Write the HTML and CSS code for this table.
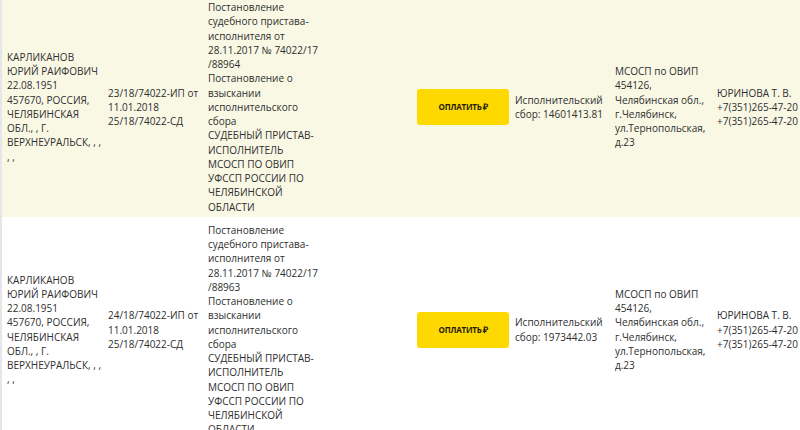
FILE: index.html
```html
<!DOCTYPE html>
<html lang="ru">
<head>
<meta charset="utf-8">
<title>Задолженности</title>
<link rel="stylesheet" href="styles.css">
</head>
<body>
<div class="page">
  <div class="table">
    <div class="row row-alt">
      <div class="cell">КАРЛИКАНОВ<br>ЮРИЙ РАИФОВИЧ<br>22.08.1951<br>457670, РОССИЯ,<br>ЧЕЛЯБИНСКАЯ<br>ОБЛ., , Г.<br>ВЕРХНЕУРАЛЬСК, , ,<br>, ,</div>
      <div class="cell">23/18/74022-ИП от<br>11.01.2018<br>25/18/74022-СД</div>
      <div class="cell"><div class="doc">Постановление<br>судебного пристава-<br>исполнителя от<br>28.11.2017 № 74022/17<br>/88964<br>Постановление о<br>взыскании<br>исполнительского<br>сбора<br>СУДЕБНЫЙ ПРИСТАВ-<br>ИСПОЛНИТЕЛЬ<br>МСОСП ПО ОВИП<br>УФССП РОССИИ ПО<br>ЧЕЛЯБИНСКОЙ<br>ОБЛАСТИ</div></div>
      <div class="cell cell-btn"><button class="pay">ОПЛАТИТЬ<span class="rub">₽</span></button></div>
      <div class="cell">Исполнительский<br>сбор: 14601413.81</div>
      <div class="cell">МСОСП по ОВИП<br>454126,<br>Челябинская обл.,<br>г.Челябинск,<br>ул.Тернопольская,<br>д.23</div>
      <div class="cell cell-last">ЮРИНОВА Т. В.<br>+7(351)265-47-20<br>+7(351)265-47-20</div>
    </div>
    <div class="row">
      <div class="cell">КАРЛИКАНОВ<br>ЮРИЙ РАИФОВИЧ<br>22.08.1951<br>457670, РОССИЯ,<br>ЧЕЛЯБИНСКАЯ<br>ОБЛ., , Г.<br>ВЕРХНЕУРАЛЬСК, , ,<br>, ,</div>
      <div class="cell">24/18/74022-ИП от<br>11.01.2018<br>25/18/74022-СД</div>
      <div class="cell"><div class="doc">Постановление<br>судебного пристава-<br>исполнителя от<br>28.11.2017 № 74022/17<br>/88963<br>Постановление о<br>взыскании<br>исполнительского<br>сбора<br>СУДЕБНЫЙ ПРИСТАВ-<br>ИСПОЛНИТЕЛЬ<br>МСОСП ПО ОВИП<br>УФССП РОССИИ ПО<br>ЧЕЛЯБИНСКОЙ<br>ОБЛАСТИ</div></div>
      <div class="cell cell-btn"><button class="pay">ОПЛАТИТЬ<span class="rub">₽</span></button></div>
      <div class="cell">Исполнительский<br>сбор: 1973442.03</div>
      <div class="cell">МСОСП по ОВИП<br>454126,<br>Челябинская обл.,<br>г.Челябинск,<br>ул.Тернопольская,<br>д.23</div>
      <div class="cell cell-last">ЮРИНОВА Т. В.<br>+7(351)265-47-20<br>+7(351)265-47-20</div>
    </div>
  </div>
</div>
</body>
</html>
```

FILE: styles.css
```css
html, body {
  margin: 0;
  padding: 0;
  background: #ffffff;
  overflow: hidden;
}
body {
  width: 800px;
  height: 430px;
  font-family: "Open Sans", "Liberation Sans", sans-serif;
  font-size: 10px;
  line-height: 14.25px;
  color: #2e2e2e;
}
.page {
  border-left: 2px solid #e4e6e9;
  height: 430px;
  overflow: hidden;
}
.table {
  margin-top: -6px;
  width: 798px;
}
.row {
  display: grid;
  grid-template-columns: 101px 100px 207px 100px 100px 102px 88px;
  align-items: center;
  background: #ffffff;
  padding: 6px 0 6px;
}
.row-alt {
  background: #f9f8e5;
  padding-bottom: 3px;
}
.cell {
  padding: 0 0 0 5px;
  white-space: nowrap;
}
.doc {
  width: 118px;
}
.cell-btn {
  padding-left: 7px;
}
.pay {
  display: flex;
  align-items: center;
  justify-content: center;
  width: 92px;
  height: 36px;
  border: none;
  border-radius: 3px;
  background: #fdd900;
  color: #1f1a0a;
  font-family: "Open Sans", "Liberation Sans", sans-serif;
  font-size: 8px;
  font-weight: 700;
  letter-spacing: -0.2px;
  padding: 0;
}
.rub {
  font-size: 9px;
  font-weight: 800;
  margin-left: 1px;
}
```
